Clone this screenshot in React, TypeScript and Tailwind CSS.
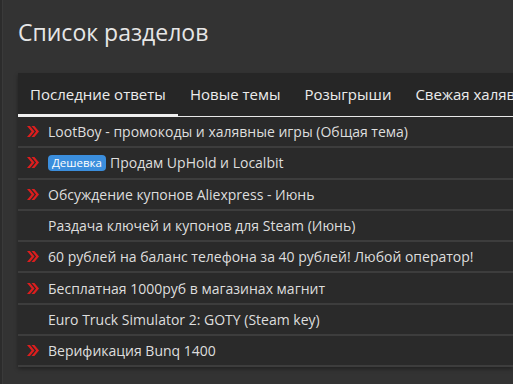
import React from "react";

const rows: { text: string; icon: boolean; badge?: string }[] = [
  { text: "LootBoy - промокоды и халявные игры (Общая тема)", icon: true },
  { text: "Продам UpHold и Localbit", icon: true, badge: "Дешевка" },
  { text: "Обсуждение купонов Aliexpress - Июнь", icon: true },
  { text: "Раздача ключей и купонов для Steam (Июнь)", icon: false },
  { text: "60 рублей на баланс телефона за 40 рублей! Любой оператор!", icon: true },
  { text: "Бесплатная 1000руб в магазинах магнит", icon: true },
  { text: "Euro Truck Simulator 2: GOTY (Steam key)", icon: false },
  { text: "Верификация Bunq 1400", icon: true },
];

function Chevrons() {
  return (
    <svg width="12" height="11" viewBox="0 0 12 11" className="shrink-0">
      <path d="M0 0 L4.6 5.5 L0 11 L2.9 11 L7.5 5.5 L2.9 0 Z" fill="#dc1e1e" />
      <path d="M4.5 0 L9.1 5.5 L4.5 11 L7.4 11 L12 5.5 L7.4 0 Z" fill="#dc1e1e" />
    </svg>
  );
}

export default function App() {
  return (
    <div
      className="w-[513px] h-[384px] overflow-hidden bg-[#333333] flex"
      style={{ fontFamily: '"Open Sans", "Noto Sans", sans-serif' }}
    >
      <div className="w-[3px] bg-[#2c2c2c] border-r border-[#3a3a3a] shrink-0" />
      <div className="flex-1 pl-[15px] min-w-0">
        <h1 className="text-[23px] leading-[30px] text-[#e6e6e6] pt-[17px] pb-[26px] whitespace-nowrap">
          Список разделов
        </h1>
        <div className="bg-[#2a2a2a] shadow-[0_2px_4px_rgba(0,0,0,0.35)]">
          <div className="flex h-[44px] bg-[#262626] border-b border-[#e8e8e8] whitespace-nowrap text-[15px] text-[#ececec]">
            <div className="relative px-[12px] flex items-center w-[160px] shrink-0">
              Последние ответы
              <div className="absolute left-0 right-0 bottom-[-1px] h-[3px] bg-[#f0f0f0]" />
            </div>
            <div className="px-[12px] flex items-center shrink-0">Новые темы</div>
            <div className="px-[12px] flex items-center shrink-0">Розыгрыши</div>
            <div className="px-[12px] flex items-center shrink-0">Свежая халява</div>
          </div>
          {rows.map((r, i) => (
            <div
              key={i}
              className="flex items-center h-[31.3px] pl-[9px] gap-[9px] border-b-2 border-[#3d3d3d] whitespace-nowrap text-[14px] text-[#dedede]"
            >
              <div className="w-[12px] shrink-0 flex items-center">{r.icon && <Chevrons />}</div>
              <div className="flex items-center gap-[4px]">
                {r.badge && (
                  <span className="bg-[#3b8edd] text-white text-[11.5px] leading-[16px] px-[4px] rounded-[4px]">
                    {r.badge}
                  </span>
                )}
                <span>{r.text}</span>
              </div>
            </div>
          ))}
        </div>
      </div>
    </div>
  );
}
